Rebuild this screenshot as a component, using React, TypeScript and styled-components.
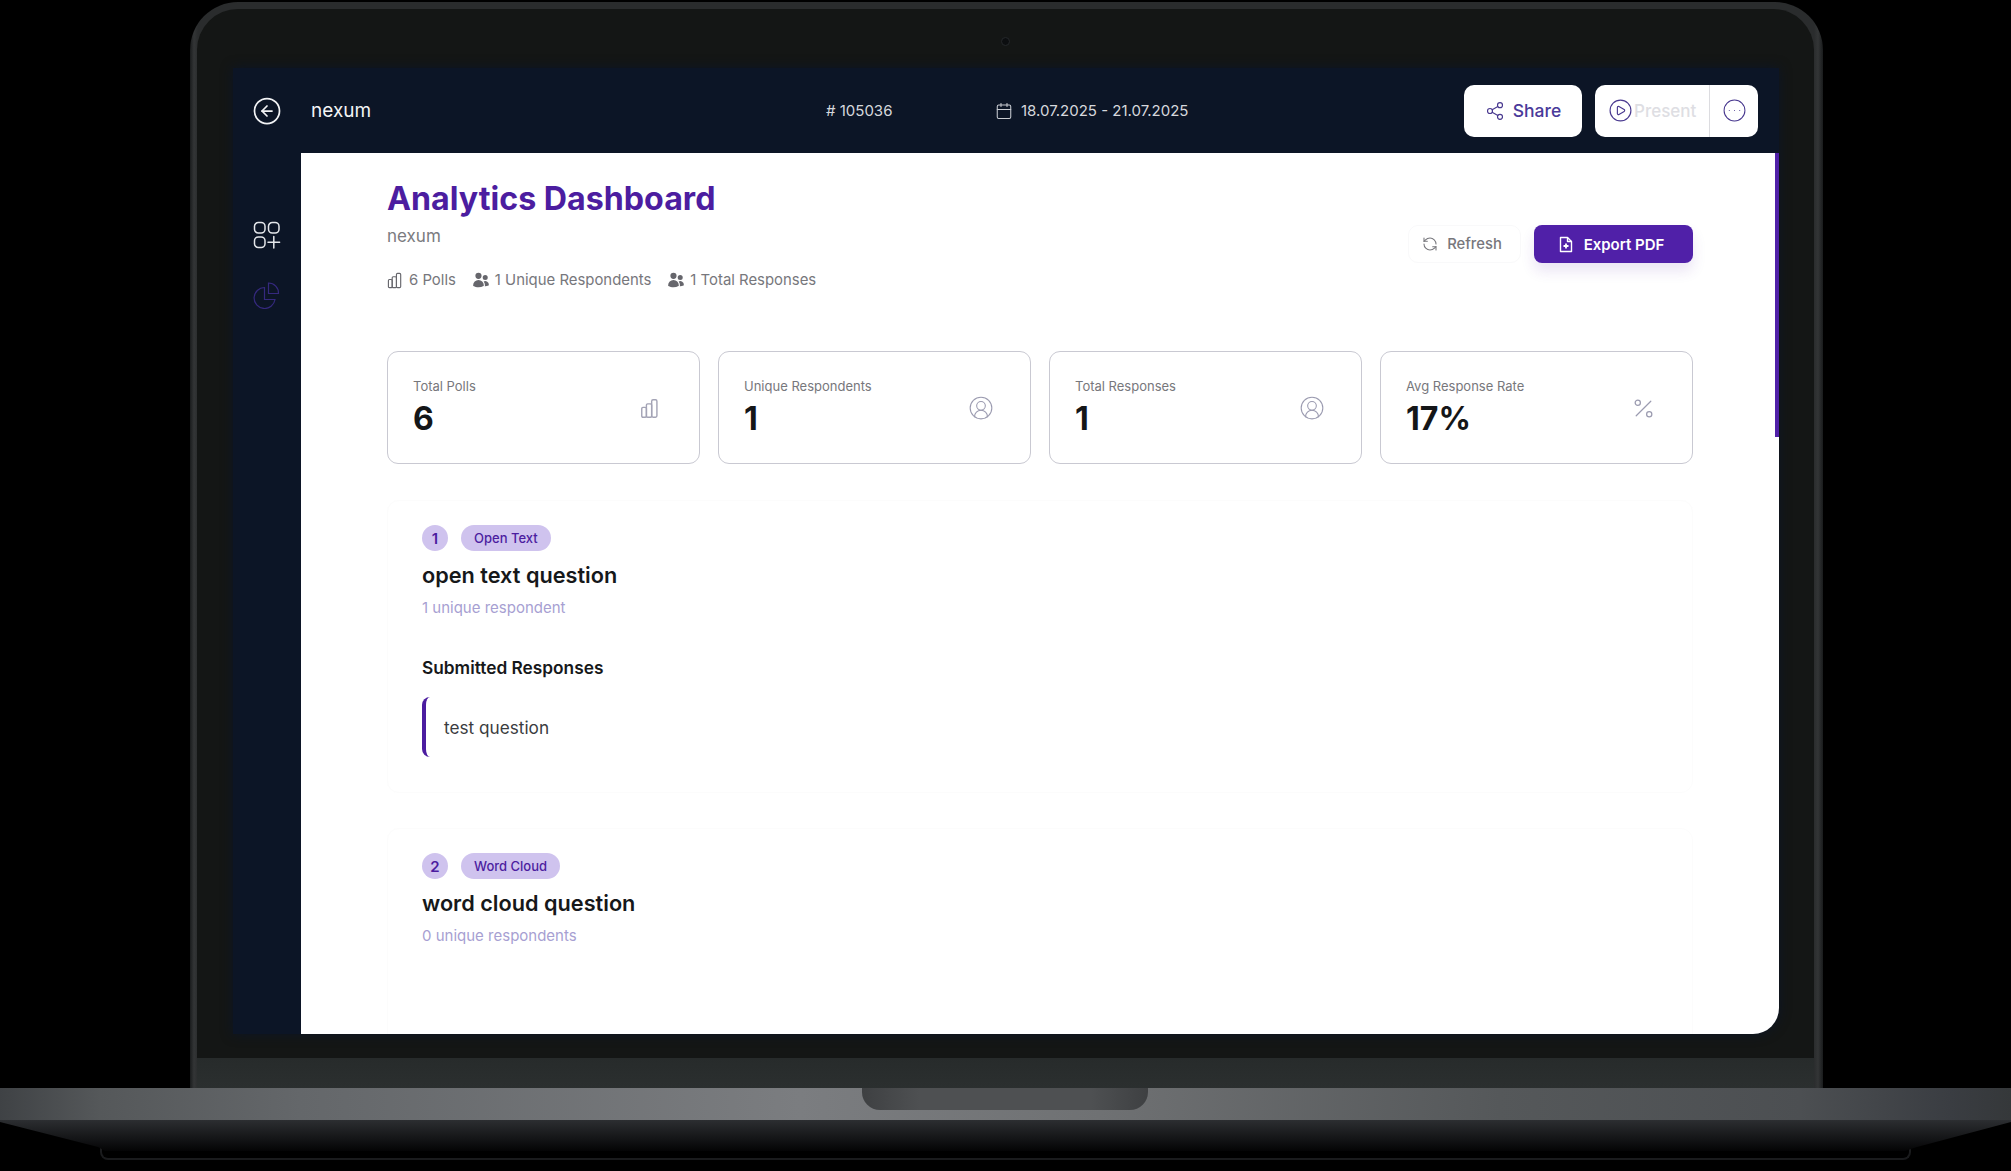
import React from 'react'
import styled, { createGlobalStyle } from 'styled-components'
import {
  CircleArrowLeft,
  Calendar,
  Share2,
  CirclePlay,
  CircleEllipsis,
  RefreshCcw,
  CircleUserRound,
  Percent,
} from 'lucide-react'
import { HiUsers } from 'react-icons/hi2'

const Global = createGlobalStyle`
  html, body {
    margin: 0;
    padding: 0;
    background: #000;
    font-family: Inter, "Liberation Sans", sans-serif;
  }
  * { box-sizing: border-box; }
`

const Stage = styled.div`
  width: 2011px;
  height: 1171px;
  overflow: hidden;
  background: #000;
`

const Lid = styled.div`
  width: 1633px;
  height: 1086px;
  margin: 2px 0 0 190px;
  padding: 7px 9px 0 7px;
  border-radius: 48px 48px 0 0;
  background: linear-gradient(90deg, #1a1c1d 0, #333536 4px, #2a2c2d 8px, #2a2c2d 1624px, #333536 1628px, #1a1c1d 100%);
  display: flex;
`

const Bezel = styled.div`
  flex: 1;
  display: flex;
  flex-direction: column;
  border-radius: 41px 41px 0 0;
  background: #141615;
  overflow: hidden;
`

const CameraRow = styled.div`
  height: 59px;
  display: flex;
  justify-content: center;
  padding-top: 28px;
`

const Camera = styled.div`
  width: 9px;
  height: 9px;
  border-radius: 50%;
  background: #0c0e10;
  border: 1.5px solid #25282a;
`

const Screen = styled.div`
  flex: 1;
  margin: 0 35px 24px 36px;
  display: flex;
  flex-direction: column;
  background: #0c1526;
  box-shadow: 0 0 12px #0c1526;
  border-radius: 0 0 26px 0;
  overflow: hidden;
`

const Chin = styled.div`
  height: 30px;
  background: linear-gradient(180deg, #272b2b, #2b2f2f);
`

const TopBar = styled.header`
  height: 85px;
  flex-shrink: 0;
  display: flex;
  align-items: center;
  padding: 0 21px 0 19px;
  color: #fff;
`

const BackSlot = styled.div`
  width: 59px;
  display: flex;
  align-items: center;
`

const ProjectName = styled.div`
  width: 515px;
  font-size: 19px;
  line-height: 24px;
  color: #f2f3f5;
`

const PollId = styled.div`
  width: 169px;
  font-size: 15px;
  color: #d6d8dd;
`

const DateRange = styled.div`
  display: flex;
  align-items: center;
  gap: 8px;
  font-size: 15px;
  color: #d6d8dd;
`

const BarActions = styled.div`
  margin-left: auto;
  display: flex;
  gap: 13px;
`

const ShareButton = styled.button`
  width: 118px;
  height: 52px;
  border: 0;
  border-radius: 10px;
  background: #fff;
  display: flex;
  align-items: center;
  justify-content: center;
  gap: 8px;
  font: 500 17.5px Inter, sans-serif;
  color: #4a3a9a;
`

const PresentGroup = styled.div`
  width: 163px;
  height: 52px;
  border-radius: 10px;
  background: #fff;
  display: flex;
`

const PresentButton = styled.div`
  width: 115px;
  display: flex;
  align-items: center;
  padding-left: 13px;
  gap: 1px;
  font-size: 17px;
  font-weight: 500;
  color: #dedee3;
  border-right: 1px solid #dcdce0;
`

const MoreButton = styled.div`
  flex: 1;
  display: flex;
  align-items: center;
  justify-content: center;
`

const Body = styled.div`
  flex: 1;
  min-height: 0;
  display: flex;
`

const Sidebar = styled.nav`
  width: 68px;
  flex-shrink: 0;
  display: flex;
  flex-direction: column;
  align-items: center;
  padding-top: 68px;
  gap: 32px;
`

const Content = styled.main`
  flex: 1;
  min-width: 0;
  position: relative;
  background: #fff;
  padding: 24px 86px 0;
  overflow: hidden;
`

const ScrollThumb = styled.div`
  position: absolute;
  top: 0;
  right: 0;
  width: 4px;
  height: 284px;
  background: #5020a8;
`

const PageHeader = styled.div`
  height: 174px;
  display: flex;
  justify-content: space-between;
`

const Title = styled.h1`
  margin: 0;
  font-size: 32.2px;
  line-height: 44px;
  font-weight: 700;
  color: #4c1da0;
`

const Subtitle = styled.div`
  margin-top: 4px;
  font-size: 17px;
  line-height: 22px;
  color: #7b7b80;
`

const MetaRow = styled.div`
  margin-top: 23px;
  display: flex;
  gap: 16px;
`

const MetaItem = styled.div`
  display: flex;
  align-items: center;
  gap: 5px;
  font-size: 14.9px;
  line-height: 20px;
  color: #77777c;
`

const HeaderActions = styled.div`
  display: flex;
  gap: 13px;
  margin-top: 48px;
  align-items: flex-start;
`

const RefreshButton = styled.button`
  width: 113px;
  height: 38px;
  padding: 0 6px 0 1px;
  border: 1px solid #f9f9fa;
  border-radius: 10px;
  background: #fff;
  display: flex;
  align-items: center;
  justify-content: center;
  gap: 9px;
  font: 500 14.8px Inter, sans-serif;
  color: #77777c;
`

const ExportButton = styled.button`
  width: 159px;
  height: 38px;
  padding: 0 6px 0 1px;
  border: 0;
  border-radius: 8px;
  background: #5020a8;
  box-shadow: 0 8px 14px rgba(80, 32, 168, 0.12);
  display: flex;
  align-items: center;
  justify-content: center;
  gap: 10px;
  font: 600 15px Inter, sans-serif;
  color: #fff;
`

const StatGrid = styled.div`
  display: grid;
  grid-template-columns: repeat(4, 1fr);
  gap: 18px;
`

const StatCard = styled.div`
  height: 113px;
  padding: 25px 26px 0 25px;
  border: 1.5px solid #c9c9d2;
  border-radius: 11px;
  display: flex;
  justify-content: space-between;
`

const StatLabel = styled.div`
  font-size: 13px;
  line-height: 18px;
  color: #77777c;
`

const StatValue = styled.div`
  margin-top: 3px;
  font-size: 32px;
  line-height: 41px;
  font-weight: 700;
  color: #141618;
`

const StatIcon = styled.div`
  width: 28px;
  height: 28px;
  margin: 17px 9px 0 0;
  display: flex;
  align-items: center;
  justify-content: center;
  color: #9b9bb0;
`

const QuestionCard = styled.section<{ $height: number; $gap: number }>`
  height: ${(p) => p.$height}px;
  margin-top: ${(p) => p.$gap}px;
  padding: 24px 34px 0;
  border: 1px solid #fcfcfc;
  border-radius: 12px;
`

const BadgeRow = styled.div`
  display: flex;
  gap: 13px;
`

const NumberBadge = styled.div`
  width: 26px;
  height: 26px;
  border-radius: 50%;
  background: #cfc3ee;
  display: flex;
  align-items: center;
  justify-content: center;
  font-size: 15px;
  font-weight: 600;
  color: #4c1da0;
`

const TypeBadge = styled.div`
  height: 26px;
  padding: 0 13px;
  border-radius: 13px;
  background: #cfc3ee;
  display: flex;
  align-items: center;
  font-size: 13px;
  font-weight: 500;
  color: #4c1da0;
`

const QuestionTitle = styled.h2`
  margin: 8px 0 0;
  font-size: 21.7px;
  line-height: 32px;
  font-weight: 600;
  color: #16181a;
`

const Respondents = styled.div`
  margin-top: 7px;
  font-size: 15px;
  line-height: 20px;
  color: #a79fd2;
`

const SectionHeading = styled.h3`
  margin: 38px 0 0;
  font-size: 17.3px;
  line-height: 24px;
  font-weight: 600;
  color: #16181a;
`

const ResponseQuote = styled.div`
  margin-top: 17px;
  height: 60px;
  display: flex;
  align-items: center;
  padding-left: 18px;
  border-left: 4px solid #4c1da0;
  border-radius: 8px;
  font-size: 17.2px;
  color: #3a3c40;
`

const BaseTop = styled.div`
  height: 32px;
  display: flex;
  justify-content: center;
  background: linear-gradient(
    90deg,
    #3f4245 0,
    #55585a 100px,
    #64676a 300px,
    #7b7d80 800px,
    #6f7173 1100px,
    #55585a 1500px,
    #4c4f52 1800px,
    #3a3d42 1950px,
    #35383a 100%
  );
`

const Notch = styled.div`
  width: 286px;
  height: 22px;
  margin-left: -1px;
  border-radius: 0 0 18px 18px;
  background: linear-gradient(90deg, #3e4042, #4e5052 20%, #4e5052 80%, #3e4042);
`

const BaseUnder = styled.div`
  height: 31px;
  background: linear-gradient(180deg, #2c2e31 0, #141517 60%, #040405 100%);
  clip-path: polygon(0 0, 100% 0, 100% 2px, 1917px 27px, 1905px 31px, 105px 31px, 98px 27px, 0 2px);
`

const FootLine = styled.div`
  height: 12px;
  margin: -3px 100px 0;
  border: 2px solid #1a1b1d;
  border-top: 0;
  border-radius: 0 0 8px 8px;
`

const Icon = styled.svg`
  display: block;
`

const BarsIcon = ({ size, color }: { size: number; color: string }) => (
  <Icon width={size} height={size} viewBox="0 0 18 18" fill="none" stroke={color} strokeWidth="1.2">
    <rect x="1.5" y="8" width="4" height="8.5" rx="1" />
    <rect x="5.5" y="5" width="4.5" height="11.5" rx="1" />
    <rect x="10" y="1.5" width="4.5" height="15" rx="1.2" />
  </Icon>
)

const AppsIcon = () => (
  <Icon width="28" height="28" viewBox="0 0 28 28" fill="none" stroke="#e4e6ea" strokeWidth="1.5">
    <rect x="1.5" y="1.5" width="10.5" height="10.5" rx="3.8" />
    <rect x="15.5" y="1.5" width="10.5" height="10.5" rx="3.8" />
    <rect x="1.5" y="16" width="10.5" height="10.5" rx="3.8" />
    <path d="M20.8 15.5v11.5M15 21.2h11.6" strokeLinecap="round" />
  </Icon>
)

const PieIcon = () => (
  <Icon width="28" height="28" viewBox="0 0 28 28" fill="none" stroke="#35297e" strokeWidth="1.2">
    <path d="M11.5 6.5a10.5 10.5 0 1 0 10.5 12h-10.5z" />
    <path d="M15.5 2a10 10 0 0 1 10 10.5h-10z" />
  </Icon>
)

const FilePlusIcon = () => (
  <Icon width="16" height="17" viewBox="0 0 16 17" fill="none" stroke="#fff" strokeWidth="1.4">
    <path d="M2.5 1.5h7l4 4v10h-11z" strokeLinejoin="round" />
    <path d="M9.5 1.5v4h4" strokeLinejoin="round" />
    <path d="M8 7.5v5M5.5 10h5" strokeWidth="1.8" />
  </Icon>
)

const stats = [
  { label: 'Total Polls', value: '6', icon: <BarsIcon size={21} color="#a3a3b5" /> },
  { label: 'Unique Respondents', value: '1', icon: <CircleUserRound size={26} strokeWidth={1} /> },
  { label: 'Total Responses', value: '1', icon: <CircleUserRound size={26} strokeWidth={1} /> },
  { label: 'Avg Response Rate', value: '17%', icon: <Percent size={25} strokeWidth={1.2} /> },
]

const App = () => {
  return (
    <Stage>
      <Global />
      <Lid>
        <Bezel>
          <CameraRow>
            <Camera />
          </CameraRow>
          <Screen>
            <TopBar>
              <BackSlot>
                <CircleArrowLeft size={30} strokeWidth={1.4} color="#f2f3f5" />
              </BackSlot>
              <ProjectName>nexum</ProjectName>
              <PollId># 105036</PollId>
              <DateRange>
                <Calendar size={18} strokeWidth={1.4} color="#c9ccd2" />
                18.07.2025 - 21.07.2025
              </DateRange>
              <BarActions>
                <ShareButton>
                  <Share2 size={20} strokeWidth={1.4} color="#4a3a90" />
                  Share
                </ShareButton>
                <PresentGroup>
                  <PresentButton>
                    <CirclePlay size={25} strokeWidth={1.1} color="#4a3a90" />
                    Present
                  </PresentButton>
                  <MoreButton>
                    <CircleEllipsis size={25} strokeWidth={1} color="#4a3a90" />
                  </MoreButton>
                </PresentGroup>
              </BarActions>
            </TopBar>
            <Body>
              <Sidebar>
                <AppsIcon />
                <PieIcon />
              </Sidebar>
              <Content>
                <ScrollThumb />
                <PageHeader>
                  <div>
                    <Title>Analytics Dashboard</Title>
                    <Subtitle>nexum</Subtitle>
                    <MetaRow>
                      <MetaItem>
                        <BarsIcon size={17} color="#66666c" />6 Polls
                      </MetaItem>
                      <MetaItem>
                        <HiUsers size={18} color="#66666c" />1 Unique Respondents
                      </MetaItem>
                      <MetaItem>
                        <HiUsers size={18} color="#66666c" />1 Total Responses
                      </MetaItem>
                    </MetaRow>
                  </div>
                  <HeaderActions>
                    <RefreshButton>
                      <RefreshCcw size={16} strokeWidth={1.6} />
                      Refresh
                    </RefreshButton>
                    <ExportButton>
                      <FilePlusIcon />
                      Export PDF
                    </ExportButton>
                  </HeaderActions>
                </PageHeader>
                <StatGrid>
                  {stats.map((s) => (
                    <StatCard key={s.label}>
                      <div>
                        <StatLabel>{s.label}</StatLabel>
                        <StatValue>{s.value}</StatValue>
                      </div>
                      <StatIcon>{s.icon}</StatIcon>
                    </StatCard>
                  ))}
                </StatGrid>
                <QuestionCard $height={293} $gap={36}>
                  <BadgeRow>
                    <NumberBadge>1</NumberBadge>
                    <TypeBadge>Open Text</TypeBadge>
                  </BadgeRow>
                  <QuestionTitle>open text question</QuestionTitle>
                  <Respondents>1 unique respondent</Respondents>
                  <SectionHeading>Submitted Responses</SectionHeading>
                  <ResponseQuote>test question</ResponseQuote>
                </QuestionCard>
                <QuestionCard $height={300} $gap={35}>
                  <BadgeRow>
                    <NumberBadge>2</NumberBadge>
                    <TypeBadge>Word Cloud</TypeBadge>
                  </BadgeRow>
                  <QuestionTitle>word cloud question</QuestionTitle>
                  <Respondents>0 unique respondents</Respondents>
                </QuestionCard>
              </Content>
            </Body>
          </Screen>
          <Chin />
        </Bezel>
      </Lid>
      <BaseTop>
        <Notch />
      </BaseTop>
      <BaseUnder />
      <FootLine />
    </Stage>
  )
}

export default App
